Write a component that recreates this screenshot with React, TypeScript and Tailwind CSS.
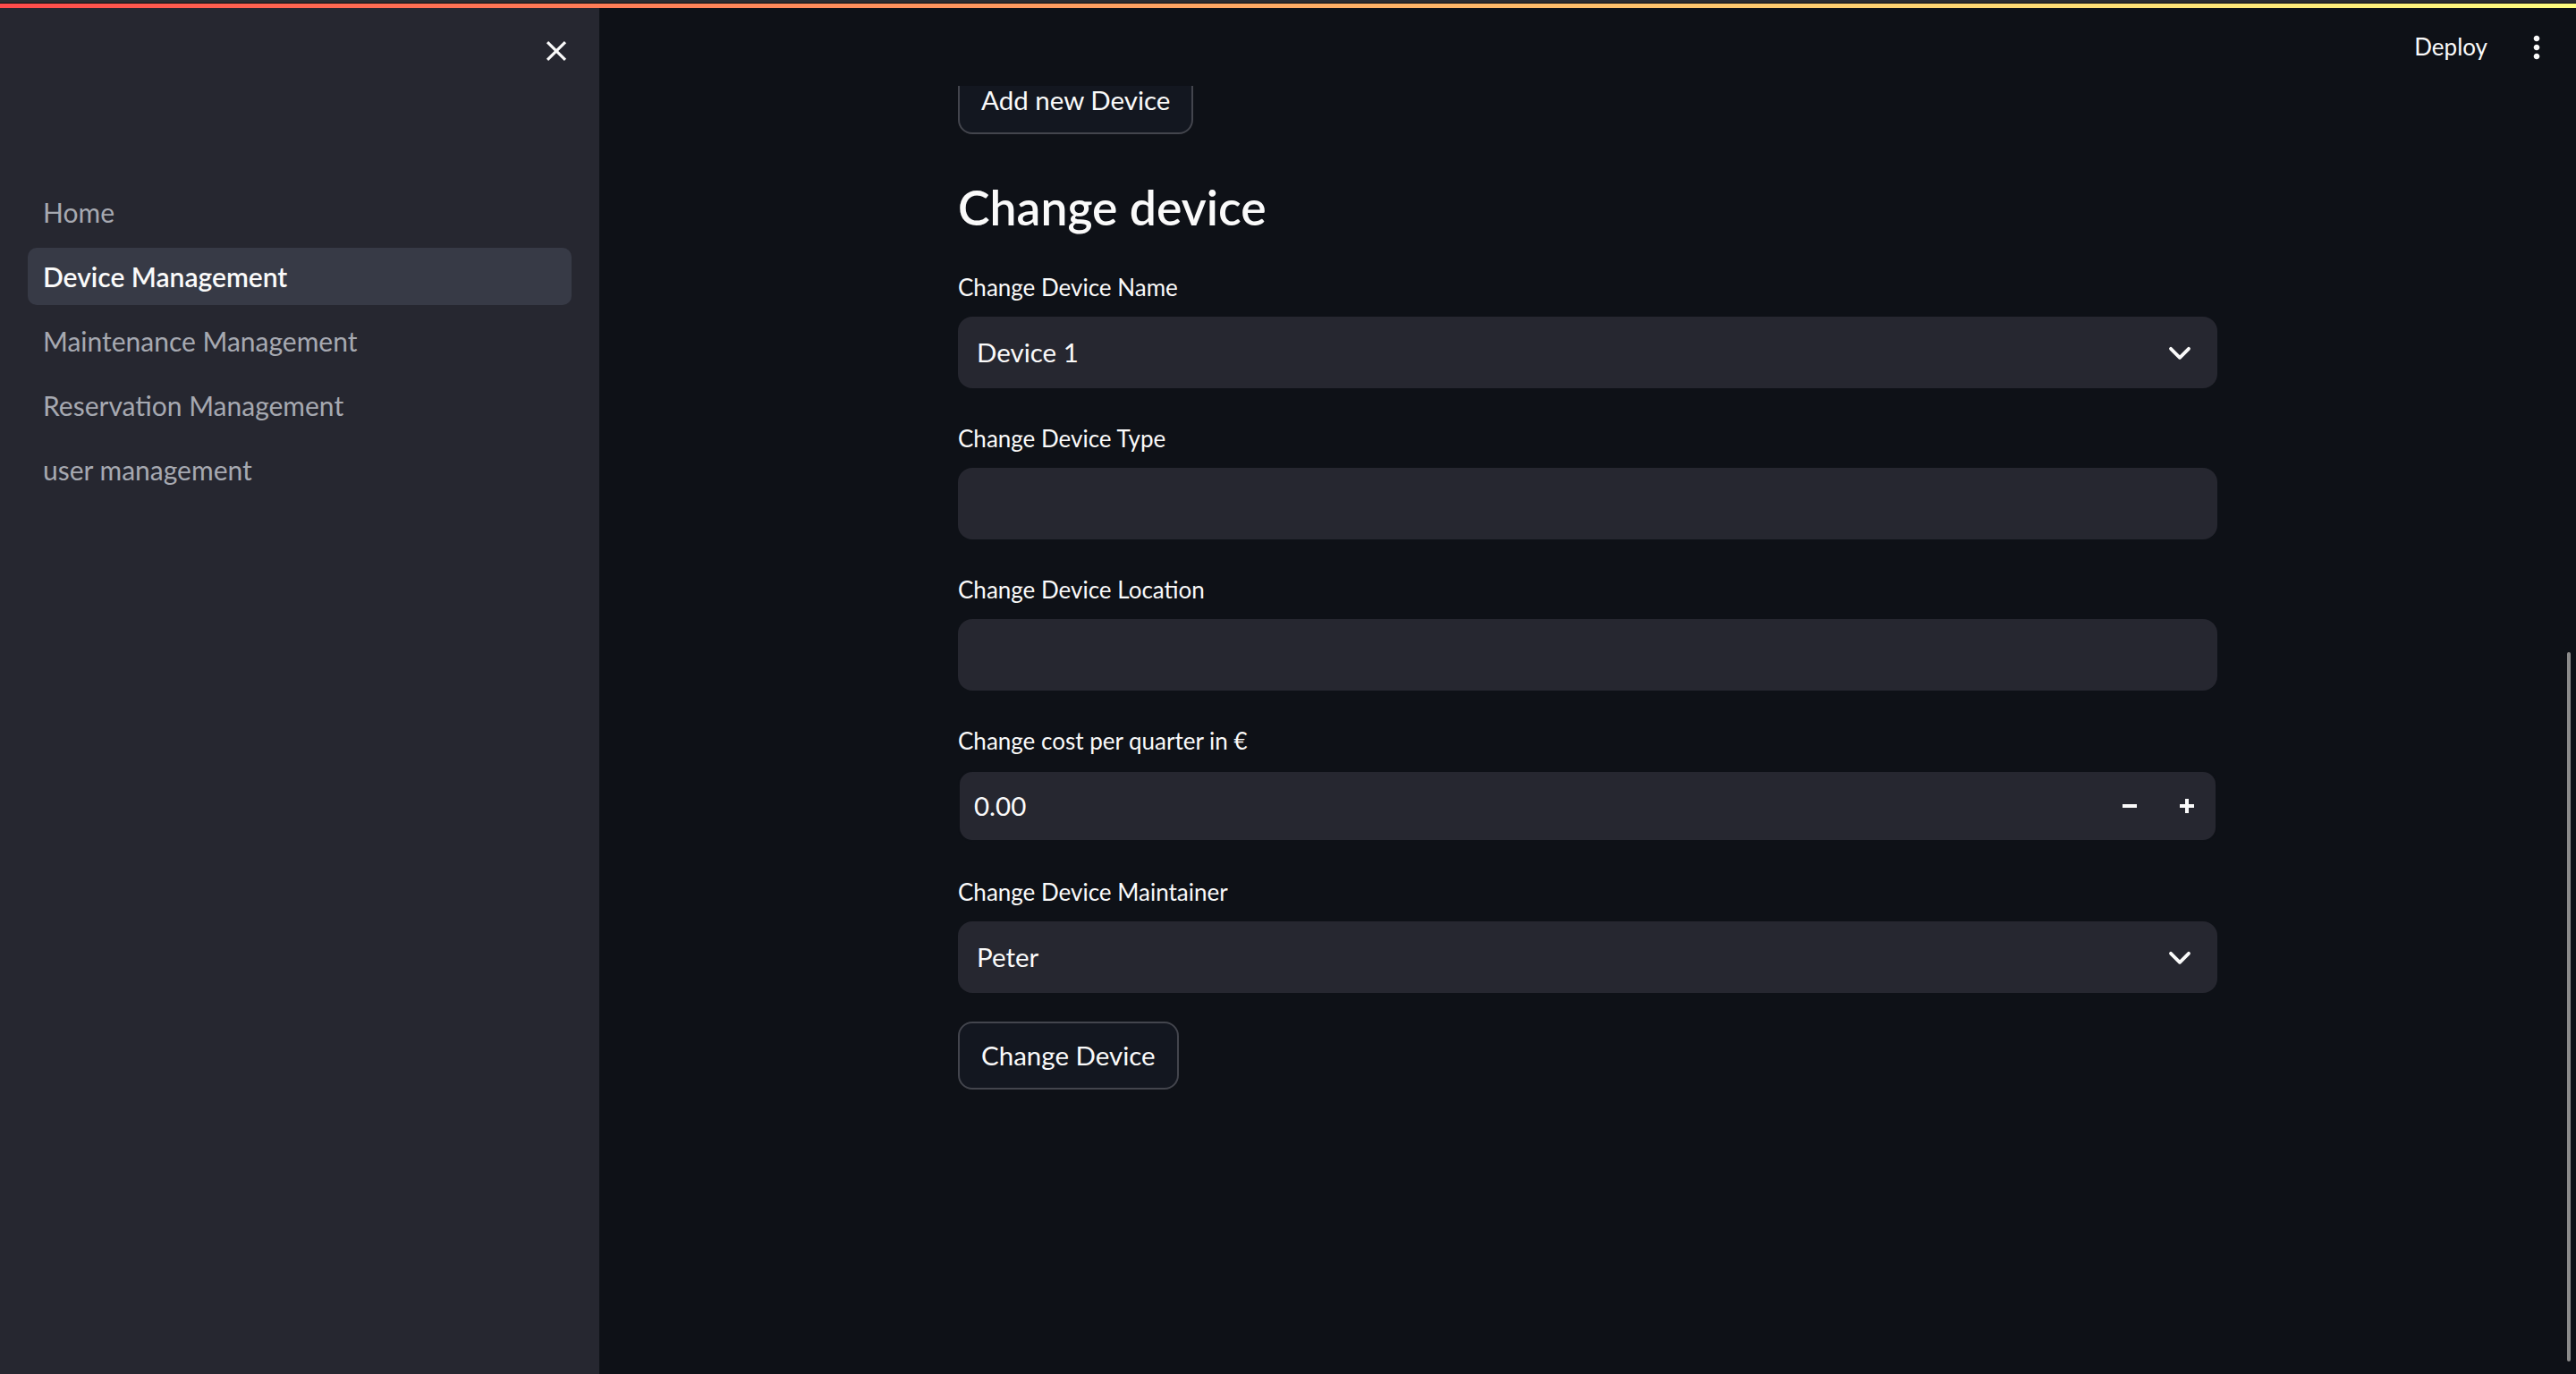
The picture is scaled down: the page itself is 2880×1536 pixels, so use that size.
import { ReactNode } from 'react';

const navItems = [
  'Home',
  'Device Management',
  'Maintenance Management',
  'Reservation Management',
  'user management',
];

const CloseIcon = () => (
  <svg width="38" height="38" viewBox="0 0 24 24" fill="#fafafa">
    <path d="M19 6.41L17.59 5 12 10.59 6.41 5 5 6.41 10.59 12 5 17.59 6.41 19 12 13.41 17.59 19 19 17.59 13.41 12z" />
  </svg>
);

const MoreIcon = () => (
  <svg width="40" height="40" viewBox="0 0 24 24" fill="#fafafa">
    <path d="M12 8c1.1 0 2-.9 2-2s-.9-2-2-2-2 .9-2 2 .9 2 2 2zm0 2c-1.1 0-2 .9-2 2s.9 2 2 2 2-.9 2-2-.9-2-2-2zm0 6c-1.1 0-2 .9-2 2s.9 2 2 2 2-.9 2-2-.9-2-2-2z" />
  </svg>
);

const Chevron = () => (
  <svg width="40" height="40" viewBox="0 0 24 24" fill="none" stroke="#fafafa" strokeWidth="2.3" strokeLinecap="round" strokeLinejoin="round">
    <path d="M6 9.5l6 6 6-6" />
  </svg>
);

const MinusIcon = () => (
  <svg width="16" height="16" viewBox="0 0 16 16" fill="#fafafa">
    <rect x="0" y="6" width="16" height="4" />
  </svg>
);

const PlusIcon = () => (
  <svg width="16" height="16" viewBox="0 0 16 16" fill="#fafafa">
    <rect x="0" y="6" width="16" height="4" />
    <rect x="6" y="0" width="4" height="16" />
  </svg>
);

const Field = ({ label, children }: { label: string; children: ReactNode }) => (
  <div className="flex flex-col">
    <div className="h-[48px] mb-[9px] flex items-center text-[26px] text-[#fafafa]">{label}</div>
    {children}
  </div>
);

const SelectBox = ({ value }: { value: string }) => (
  <div className="h-[80px] rounded-2xl bg-[#262730] flex items-center justify-between pl-[21px] pr-[22px]">
    <span className="text-[29.5px] text-[#fafafa]">{value}</span>
    <Chevron />
  </div>
);

const TextBox = () => <div className="h-[80px] rounded-2xl bg-[#262730]" />;

const NumberBox = ({ value }: { value: string }) => (
  <div className="h-[80px] rounded-2xl bg-[#262730] border-2 border-[#0e1117] flex items-center">
    <span className="flex-1 pl-[16px] text-[29.5px] text-[#fafafa]">{value}</span>
    <div className="w-[64px] h-full flex items-center justify-center">
      <MinusIcon />
    </div>
    <div className="w-[64px] h-full flex items-center justify-center">
      <PlusIcon />
    </div>
  </div>
);

const Button = ({ children, className = '' }: { children: ReactNode; className?: string }) => (
  <button
    className={`self-start h-[76px] px-[24px] rounded-2xl border-2 border-[#43454d] bg-[#131720] text-[29.5px] text-[#fafafa] ${className}`}
  >
    {children}
  </button>
);

export default function App() {
  return (
    <div className="h-screen w-full overflow-hidden bg-[#0e1117] font-['Lato',sans-serif] flex flex-col">
      {/* top decoration */}
      <div className="h-[3px] bg-[#2b2c31]" />
      <div className="h-[1px] bg-[#101114]" />
      <div className="h-[5px] bg-gradient-to-r from-[#ff4b4b] to-[#fffd80]" />

      <div className="flex flex-1 min-h-0">
        {/* Sidebar */}
        <aside className="w-[670px] shrink-0 bg-[#262730] flex flex-col px-[31px] pt-[29px]">
          <div className="flex justify-end -mr-[2px]">
            <CloseIcon />
          </div>
          <nav className="mt-[129px] flex flex-col gap-[8px]">
            {navItems.map((item) => {
              const active = item === 'Device Management';
              return (
                <div
                  key={item}
                  className={`h-[64px] px-[17px] rounded-[10px] flex items-center text-[30px] ${
                    active ? 'bg-[#373a46] text-[#fafafa] font-semibold' : 'text-[#a6a9b1]'
                  }`}
                >
                  {item}
                </div>
              );
            })}
          </nav>
        </aside>

        {/* Main */}
        <main className="relative flex-1 flex flex-col min-w-0">
          <header className="h-[87px] shrink-0 flex items-center justify-end gap-[35px] pr-[24px]">
            <span className="text-[26px] text-[#fafafa]">Deploy</span>
            <MoreIcon />
          </header>

          <div className="flex-1 overflow-hidden">
            <div className="w-[1408px] mx-auto flex flex-col">
              <Button className="-mt-[22px]">Add new Device</Button>

              <h3 className="mt-[50px] text-[53.5px] leading-[62px] font-semibold text-[#fafafa]">Change device</h3>

              <div className="mt-[35px] flex flex-col gap-[32px]">
                <Field label="Change Device Name">
                  <SelectBox value="Device 1" />
                </Field>
                <Field label="Change Device Type">
                  <TextBox />
                </Field>
                <Field label="Change Device Location">
                  <TextBox />
                </Field>
                <Field label="Change cost per quarter in €">
                  <NumberBox value="0.00" />
                </Field>
                <Field label="Change Device Maintainer">
                  <SelectBox value="Peter" />
                </Field>
                <Button>Change Device</Button>
              </div>
            </div>
          </div>

          {/* scrollbar thumb */}
          <div className="absolute right-[6px] top-[720px] h-[793px] w-[4px] rounded-full bg-[#8b8b8b]" />
        </main>
      </div>
    </div>
  );
}
